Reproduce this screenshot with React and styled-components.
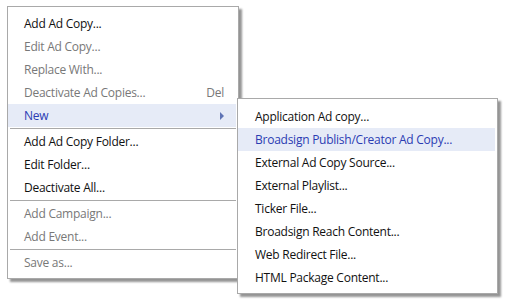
import React from "react";
import styled, { createGlobalStyle } from "styled-components";

const Global = createGlobalStyle`
  html, body { margin: 0; padding: 0; background: #ffffff; }
  body { font-family: "Open Sans", "Noto Sans", sans-serif; }
`;

const Page = styled.div`
  width: 507px;
  height: 304px;
  padding: 6px 0 0 7px;
  box-sizing: border-box;
`;

const MenuBox = styled.div`
  position: ${(p) => (p.$sub ? "absolute" : "relative")};
  ${(p) => (p.$sub ? "left: 229px; top: 91px; z-index: 2;" : "")}
  width: ${(p) => p.$w}px;
  box-sizing: border-box;
  background: #ffffff;
  border: 1px solid #a9a9a9;
  box-shadow: 3px 3px 2px rgba(0, 0, 0, 0.42);
  padding: ${(p) => (p.$sub ? "6px 2px 4px 0" : "5px 2px 4px 0")};
  display: flex;
  flex-direction: column;
`;

const Item = styled.div`
  height: 23px;
  display: flex;
  align-items: center;
  padding: 0 ${(p) => (p.$sub ? 14 : 11)}px 0 ${(p) => (p.$sub ? 17 : 16)}px;
  font-size: 12px;
  letter-spacing: -0.25px;
  color: ${(p) => (p.$hot ? "#2b3cb3" : p.$disabled ? "#787878" : "#111111")};
  background: ${(p) => (p.$hot ? "#e6ebf7" : "transparent")};
  white-space: nowrap;
`;

const Label = styled.span`
  flex: 1;
`;

const Shortcut = styled.span`
  color: #787878;
  margin-right: 1px;
`;

const Arrow = styled.span`
  width: 0;
  height: 0;
  border-top: 4px solid transparent;
  border-bottom: 4px solid transparent;
  border-left: 4px solid #5f74b5;
  margin-right: 1px;
`;

const Separator = styled.div`
  height: 1px;
  background: #a9a9a9;
  margin: 1px 0 1px 2px;
`;

const mainItems = [
  { t: "Add Ad Copy..." },
  { t: "Edit Ad Copy...", d: true },
  { t: "Replace With...", d: true },
  { t: "Deactivate Ad Copies...", d: true, k: "Del" },
  { t: "New", hot: true, arrow: true },
  { sep: true },
  { t: "Add Ad Copy Folder..." },
  { t: "Edit Folder..." },
  { t: "Deactivate All..." },
  { sep: true },
  { t: "Add Campaign...", d: true },
  { t: "Add Event...", d: true },
  { sep: true },
  { t: "Save as...", d: true },
];

const subItems = [
  { t: "Application Ad copy..." },
  { t: "Broadsign Publish/Creator Ad Copy...", hot: true },
  { t: "External Ad Copy Source..." },
  { t: "External Playlist..." },
  { t: "Ticker File..." },
  { t: "Broadsign Reach Content..." },
  { t: "Web Redirect File..." },
  { t: "HTML Package Content..." },
];

export default function App() {
  return (
    <>
      <Global />
      <Page>
        <MenuBox $w={232}>
          {mainItems.map((it, i) =>
            it.sep ? (
              <Separator key={i} />
            ) : (
              <Item key={i} $disabled={it.d} $hot={it.hot}>
                <Label>{it.t}</Label>
                {it.k && <Shortcut>{it.k}</Shortcut>}
                {it.arrow && <Arrow />}
              </Item>
            )
          )}
          <MenuBox $sub $w={261}>
            {subItems.map((it, i) => (
              <Item key={i} $sub $hot={it.hot}>
                <Label>{it.t}</Label>
              </Item>
            ))}
          </MenuBox>
        </MenuBox>
      </Page>
    </>
  );
}
